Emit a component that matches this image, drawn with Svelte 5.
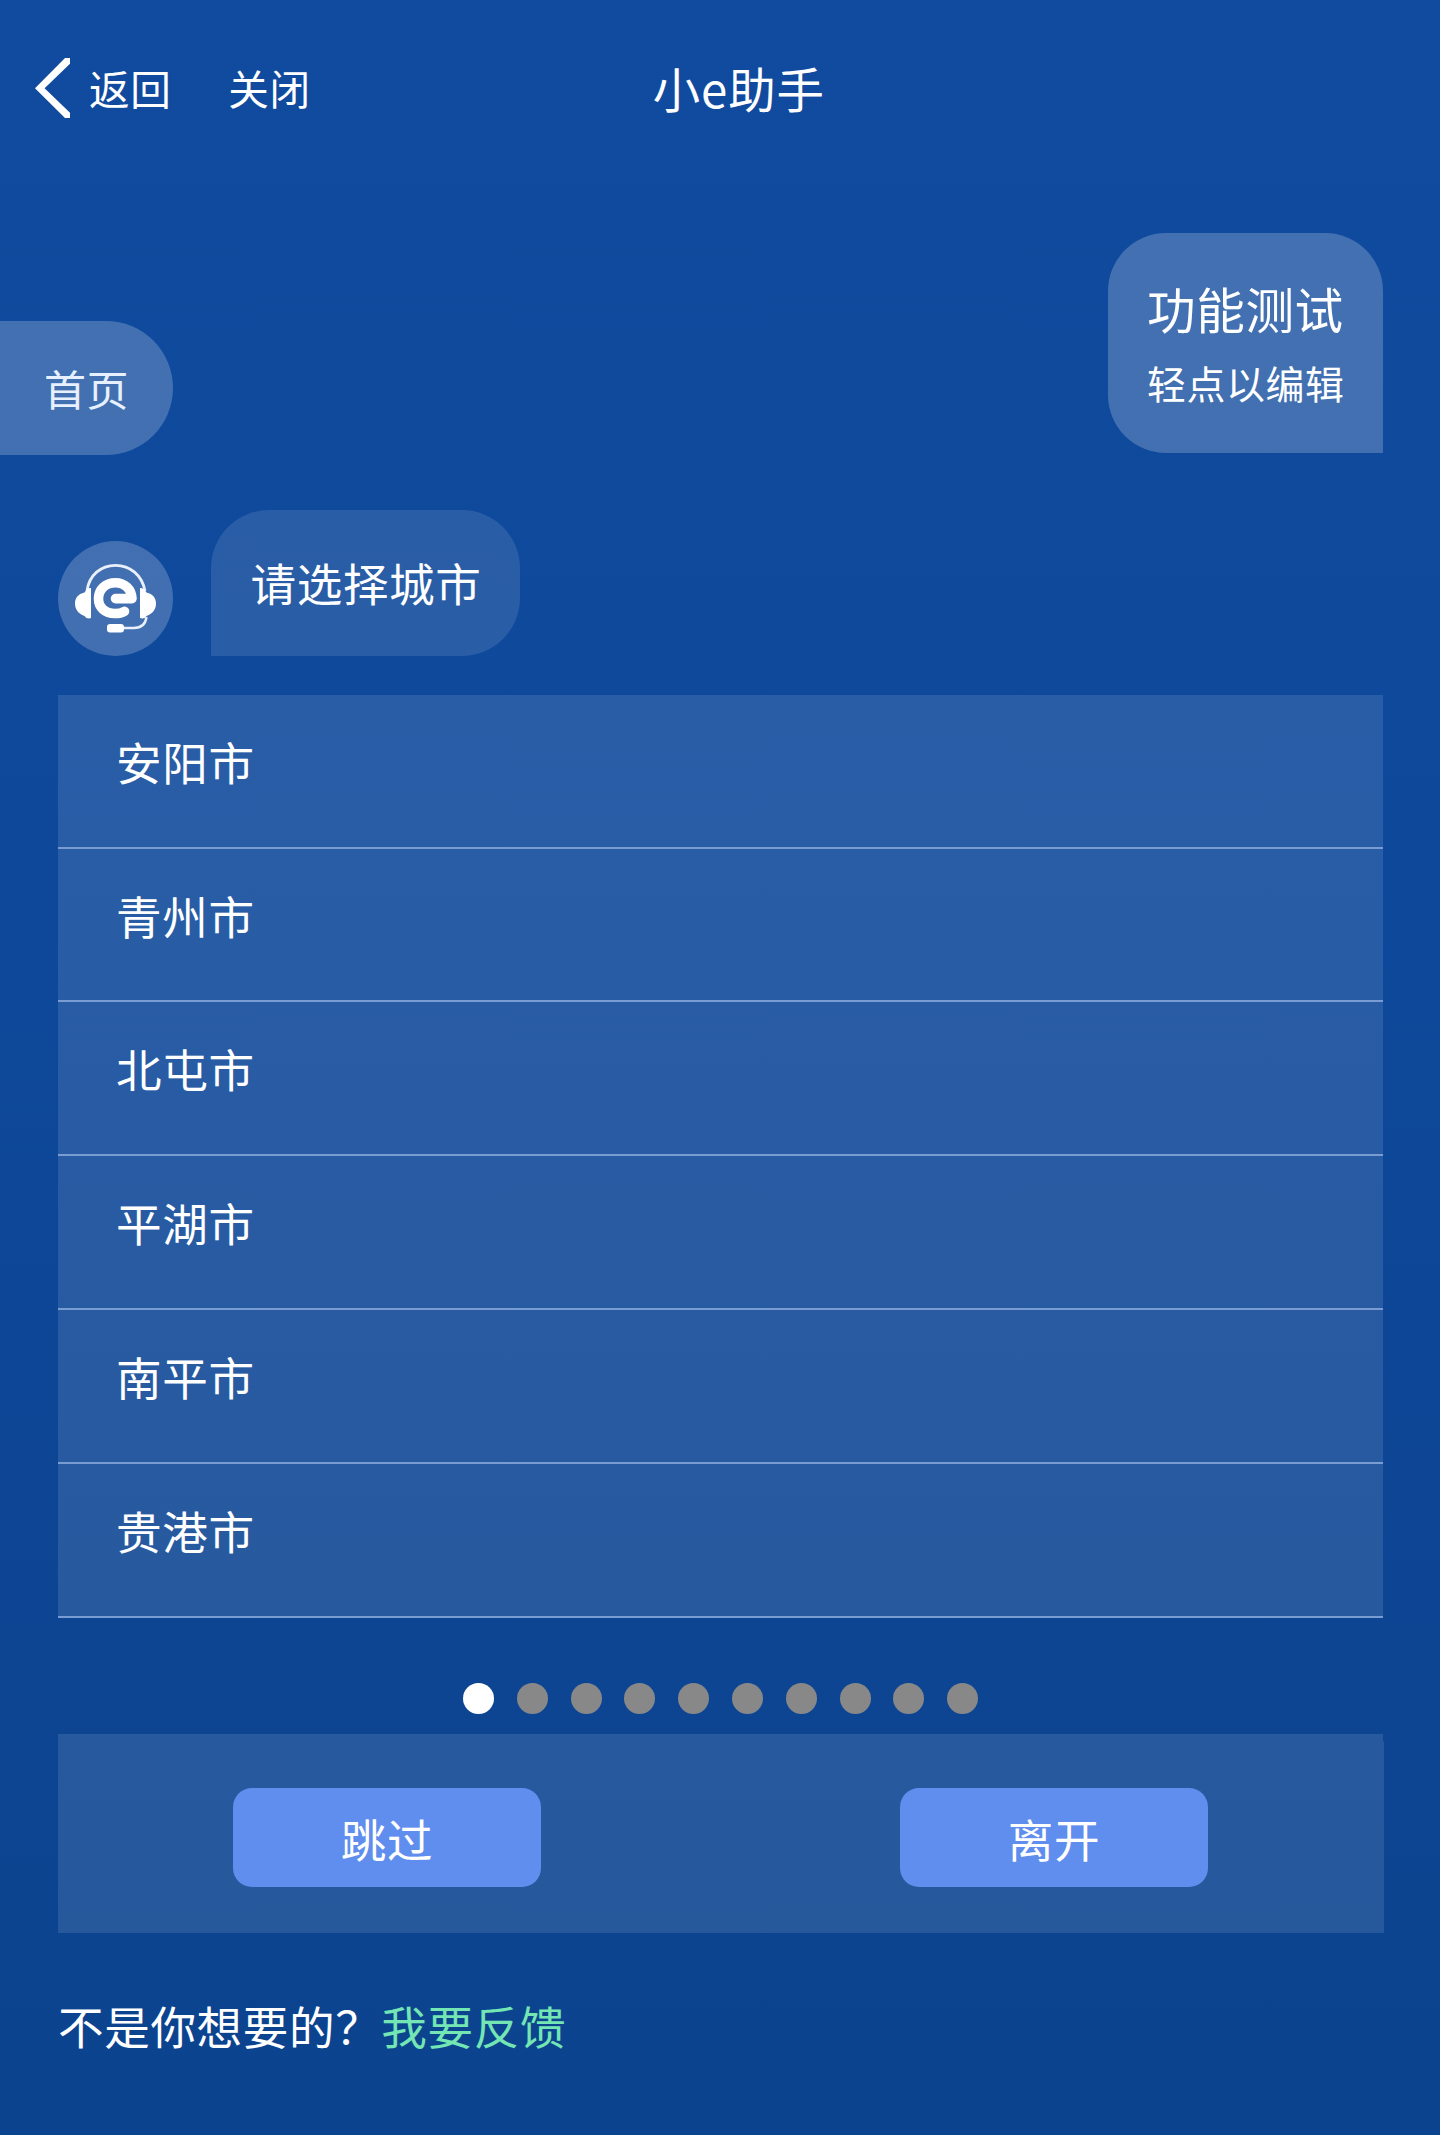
<script>
  const cities = ['安阳市', '青州市', '北屯市', '平湖市', '南平市', '贵港市'];
  const pages = Array.from({ length: 10 }, (_, i) => i);
  let current = $state(0);
</script>

<div class="screen">
  <header>
    <button class="back" aria-label="返回">
      <svg width="35" height="60" viewBox="0 0 35 60" aria-hidden="true">
        <path d="M35 0V5.8L9.6 30.2L35 54.8V60H30L0 30.2L30 0Z" fill="#fff" />
      </svg>
      <span>返回</span>
    </button>
    <button class="close">关闭</button>
    <h1>小e助手</h1>
  </header>

  <div class="top">
    <button class="home">首页</button>
    <div class="mine">
      <p class="query">功能测试</p>
      <p class="hint">轻点以编辑</p>
    </div>
  </div>

  <div class="answer">
    <div class="avatar">
      <svg width="115" height="115" viewBox="0 0 115 115" fill="none" aria-hidden="true">
        <path d="M29 50C31 34 43 24.3 57.500 24.300S84 34 87 50" stroke="#e9f0fb" stroke-width="2.800" />
        <path d="M33 50V77C31 78 28 77.500 26.500 75C20 72.500 17 68 17 62.500S20 53 26.500 51.500C28 49 30 47 33 47Z" fill="#fff" />
        <path d="M82 50V77C84 78 87 77.500 88.500 75C95 72.500 98 68 98 62.500S95 53 88.500 51.500C87 49 85 47 82 47Z" fill="#fff" />
        <path d="M57.500 57.600H74C73.500 48 66.500 41.700 57.500 41.700C47.500 41.700 40.500 48.500 40.500 57.500C40.500 66.500 47 72.500 57 72.500C61 72.500 64 71.800 66.500 70.300" stroke="#fff" stroke-width="9.600" stroke-linecap="round" stroke-linejoin="round" />
        <path d="M65 87H76C83 87 87.500 83 88.500 76" stroke="#e9f0fb" stroke-width="2.400" />
        <rect x="49" y="83" width="17" height="8.600" rx="3" fill="#fff" />
      </svg>
    </div>
    <p class="bubble">请选择城市</p>
  </div>

  <ul>
    {#each cities as city}
      <li>{city}</li>
    {/each}
  </ul>

  <nav class="dots" aria-label="分页">
    {#each pages as page}
      <button class:active={page === current} onclick={() => (current = page)} aria-label={`${page + 1}`}></button>
    {/each}
  </nav>

  <div class="strip"></div>
  <div class="actions">
    <button>跳过</button>
    <button>离开</button>
  </div>

  <footer>不是你想要的？<a href="#feedback">我要反馈</a></footer>
</div>

<style>
  :global(body) {
    margin: 0;
  }
  .screen {
    box-sizing: border-box;
    display: flex;
    flex-direction: column;
    width: 1440px;
    height: 2135px;
    overflow: hidden;
    background: linear-gradient(#114b9f, #0e489a 45%, #0c438e);
    color: #fff;
    font-family: 'Noto Sans CJK SC', sans-serif;
    font-size: 45.6px;
    letter-spacing: 0.6px;
    line-height: 60px;
  }
  button {
    margin: 0;
    padding: 0;
    border: 0;
    background: none;
    color: inherit;
    font: inherit;
    letter-spacing: inherit;
  }
  p,
  h1,
  ul {
    margin: 0;
    padding: 0;
    font-weight: 400;
  }
  header {
    display: flex;
    align-items: center;
    height: 176px;
    padding-left: 35px;
    font-size: 40.6px;
  }
  .back {
    display: flex;
    align-items: center;
    gap: 19px;
  }
  .back span,
  .close {
    padding-bottom: 1px;
  }
  .close {
    margin-left: 57px;
  }
  h1 {
    margin-left: 342px;
    font-size: 47.4px;
    letter-spacing: 0.9px;
  }
  .top {
    display: flex;
    justify-content: space-between;
    align-items: flex-start;
    height: 277px;
    padding: 57px 57px 0 0;
  }
  .home {
    width: 173px;
    height: 134px;
    margin-top: 88px;
    padding-left: 44px;
    border-radius: 0 67px 67px 0;
    background: rgba(255, 255, 255, 0.21);
    color: #e6f0ff;
    font-size: 42px;
    text-align: left;
  }
  .mine {
    box-sizing: border-box;
    width: 275px;
    height: 220px;
    padding: 45px 0 0 39px;
    border-radius: 58px 58px 0 58px;
    background: rgba(255, 255, 255, 0.21);
    white-space: nowrap;
  }
  .query {
    font-size: 48.6px;
  }
  .hint {
    margin-top: 14px;
    font-size: 38.9px;
  }
  .answer {
    display: flex;
    align-items: flex-end;
    gap: 38px;
    height: 146px;
    padding-left: 58px;
  }
  .avatar {
    width: 115px;
    height: 115px;
    border-radius: 50%;
    background: rgba(255, 255, 255, 0.21);
  }
  .bubble {
    box-sizing: border-box;
    width: 309px;
    height: 146px;
    padding: 42px 0 0 39.5px;
    border-radius: 58px 58px 58px 0;
    background: rgba(255, 255, 255, 0.11);
    white-space: nowrap;
  }
  ul {
    display: grid;
    grid-template-rows: 154px 153px repeat(4, 154px);
    width: 1325px;
    height: 923px;
    margin: 39px 0 0 58px;
    background: rgba(255, 255, 255, 0.11);
    list-style: none;
  }
  li {
    padding: 36px 0 0 58px;
    border-bottom: 2px solid #799cd2;
  }
  .dots {
    display: flex;
    gap: 22.8px;
    height: 31px;
    margin: 65px 0 20px 463px;
  }
  .dots button {
    width: 31px;
    height: 31px;
    border-radius: 50%;
    background: #888;
  }
  .dots .active {
    background: #fff;
  }
  .strip {
    width: 1325px;
    height: 7px;
    margin-left: 58px;
    background: rgba(255, 255, 255, 0.11);
  }
  .actions {
    box-sizing: border-box;
    display: flex;
    gap: 359px;
    width: 1326px;
    height: 192px;
    margin-left: 58px;
    padding: 47px 0 0 175px;
    background: rgba(255, 255, 255, 0.11);
  }
  .actions button {
    width: 308px;
    height: 99px;
    border-radius: 19px;
    background: #5f8eee;
  }
  footer {
    padding: 62px 0 0 58px;
  }
  a {
    color: #73e6b4;
    text-decoration: none;
  }
</style>
